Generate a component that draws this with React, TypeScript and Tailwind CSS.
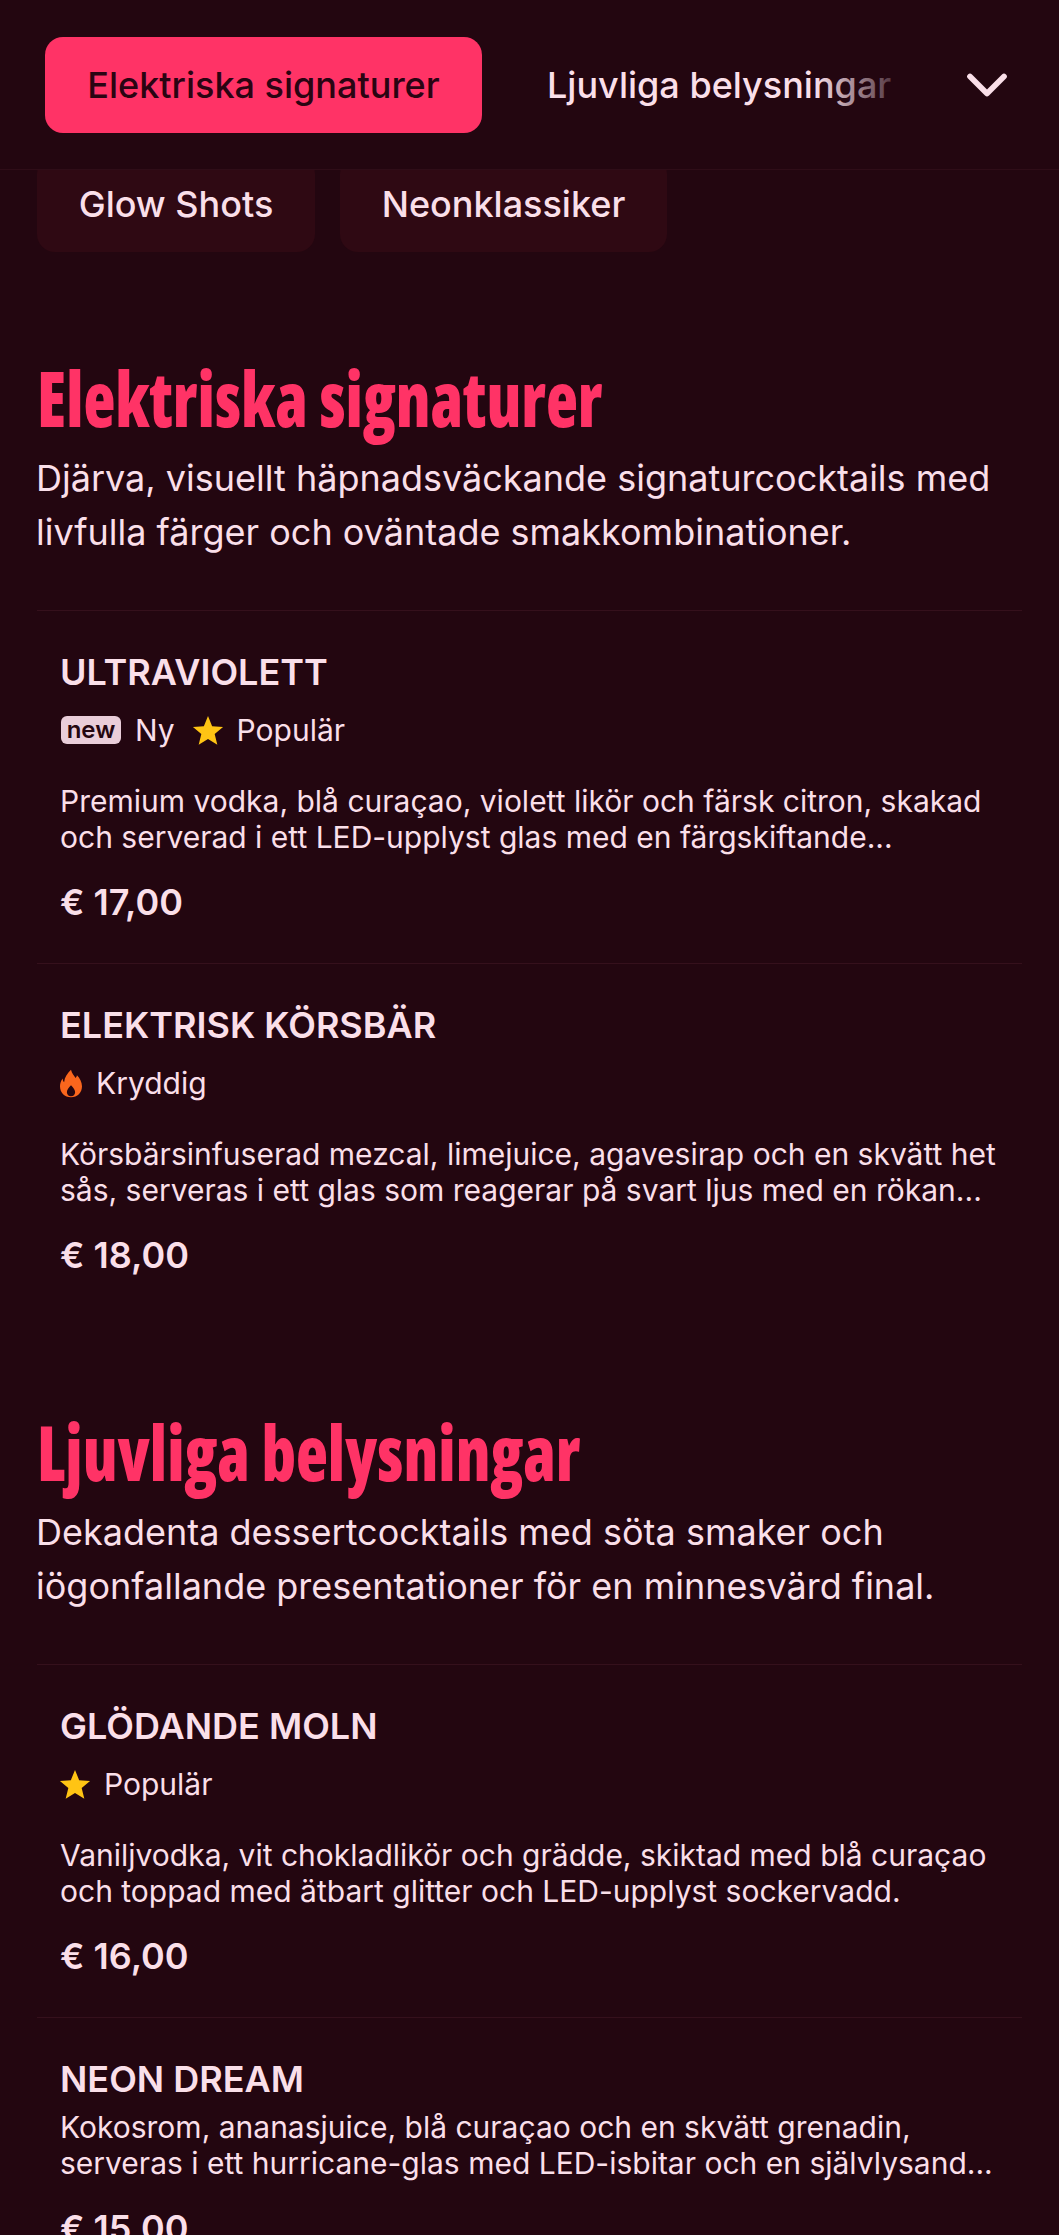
import { ChevronDown } from "lucide-react";

type Tag = "new" | "popular" | "spicy";

type Item = {
    name: string;
    tags: Tag[];
    desc: string[];
    price: string;
};

type Section = {
    title: string;
    intro: string[];
    items: Item[];
};

const sections: Section[] = [
    {
        title: "Elektriska signaturer",
        intro: [
            "Djärva, visuellt häpnadsväckande signaturcocktails med",
            "livfulla färger och oväntade smakkombinationer.",
        ],
        items: [
            {
                name: "ULTRAVIOLETT",
                tags: ["new", "popular"],
                desc: [
                    "Premium vodka, blå curaçao, violett likör och färsk citron, skakad",
                    "och serverad i ett LED-upplyst glas med en färgskiftande...",
                ],
                price: "€ 17,00",
            },
            {
                name: "ELEKTRISK KÖRSBÄR",
                tags: ["spicy"],
                desc: [
                    "Körsbärsinfuserad mezcal, limejuice, agavesirap och en skvätt het",
                    "sås, serveras i ett glas som reagerar på svart ljus med en rökan...",
                ],
                price: "€ 18,00",
            },
        ],
    },
    {
        title: "Ljuvliga belysningar",
        intro: [
            "Dekadenta dessertcocktails med söta smaker och",
            "iögonfallande presentationer för en minnesvärd final.",
        ],
        items: [
            {
                name: "GLÖDANDE MOLN",
                tags: ["popular"],
                desc: [
                    "Vaniljvodka, vit chokladlikör och grädde, skiktad med blå curaçao",
                    "och toppad med ätbart glitter och LED-upplyst sockervadd.",
                ],
                price: "€ 16,00",
            },
            {
                name: "NEON DREAM",
                tags: [],
                desc: [
                    "Kokosrom, ananasjuice, blå curaçao och en skvätt grenadin,",
                    "serveras i ett hurricane-glas med LED-isbitar och en självlysand...",
                ],
                price: "€ 15,00",
            },
        ],
    },
];

function StarIcon() {
    return (
        <svg viewBox="0 0 24 24" className="-ml-[2px] h-[32px] w-[32px] shrink-0" fill="#ffc414">
            <path d="M12 1.5l3.1 7.6 8.2.6-6.3 5.3 2 8-7-4.3-7 4.3 2-8L.7 9.700l8.2-.6z" />
        </svg>
    );
}

function FlameIcon() {
    return (
        <svg viewBox="0 0 24 30" className="-ml-[1px] h-[29px] w-[22px] shrink-0" fill="#f9661d">
            <path d="M12 0c1 4 3 6 5 9 1-1 1.500-2 1.500-3 3 3 5.500 7.500 5.500 12 0 7-5 12-12 12S0 25 0 18c0-3 1-6 3-8.500 0 2 .5 3 1.500 4C5 8 8 4 12 0zm0 17c-2.500 2.500-4.500 5-4.500 7.500 0 2.500 2 4.500 4.500 4.500s4.500-2 4.500-4.500c0-2.500-2-5-4.500-7.500z" />
        </svg>
    );
}

function TagLabel({ tag }: { tag: Tag }) {
    switch (tag) {
        case "new":
            return (
                <div className="flex items-center gap-[14px]">
                    <span className="flex h-[28px] w-[60px] items-center justify-center rounded-[6px] bg-[#e9cdd9] text-[24px] leading-none font-semibold text-[#230610]">
                        new
                    </span>
                    <span>Ny</span>
                </div>
            );
        case "popular":
            return (
                <div className="flex items-center gap-[13px]">
                    <StarIcon />
                    <span>Populär</span>
                </div>
            );
        case "spicy":
            return (
                <div className="flex items-center gap-[14px]">
                    <FlameIcon />
                    <span>Kryddig</span>
                </div>
            );
    }
}

function MenuItem({ item }: { item: Item }) {
    return (
        <div className="border-t border-[#35101c] px-[23px] pt-[39px] pb-[39px]">
            <h3 className="text-[36px] leading-[44px] font-semibold">{item.name}</h3>
            {item.tags.length > 0 && (
                <div className="mt-[16px] mb-[33px] ml-[1px] flex h-[40px] items-center gap-[19px] text-[30px]">
                    {item.tags.map((tag) => (
                        <TagLabel key={tag} tag={tag} />
                    ))}
                </div>
            )}
            <p className="mt-[8px] text-[30px] leading-[36px]">
                {item.desc.map((line) => (
                    <span key={line} className="block whitespace-nowrap">
                        {line}
                    </span>
                ))}
            </p>
            <div className="mt-[25px] text-[36px] leading-[44px] font-semibold">{item.price}</div>
        </div>
    );
}

export default function App() {
    return (
        <div className="h-[2235px] overflow-hidden bg-[#230610] font-['Inter',sans-serif] text-[#fadfe9]">
            <header className="relative z-10 flex h-[170px] items-center border-b border-[#2f0d18] bg-[#230610] pl-[45px]">
                <button className="flex h-[96px] w-[437px] shrink-0 items-center justify-center rounded-[18px] bg-[#ff3366] text-[36px] font-medium text-[#2a0412]">
                    Elektriska signaturer
                </button>
                <div className="relative ml-[65px] w-[348px] shrink-0 overflow-hidden text-[36px] font-medium whitespace-nowrap">
                    Ljuvliga belysningar
                    <div className="absolute inset-y-0 right-0 w-[80px] bg-gradient-to-r from-transparent to-[#230610]/80" />
                </div>
                <ChevronDown className="ml-[58px] h-[68px] w-[68px] shrink-0" strokeWidth={2} />
            </header>

            <div className="-mt-[14px] flex gap-[25px] pl-[37px]">
                <div className="flex h-[96px] w-[278px] items-center justify-center rounded-[18px] bg-[#2f0913] text-[36px] font-medium">
                    Glow Shots
                </div>
                <div className="flex h-[96px] w-[327px] items-center justify-center rounded-[18px] bg-[#2f0913] text-[36px] font-medium">
                    Neonklassiker
                </div>
            </div>

            <main className="px-[37px] pt-[10px]">
                {sections.map((section) => (
                    <section key={section.title} className="mt-[96px]">
                        <h2 className="origin-left scale-x-[0.855] font-['Open_Sans',sans-serif] text-[77px] leading-[80px] font-extrabold whitespace-nowrap text-[#ff3366] [font-stretch:75%]">
                            {section.title}
                        </h2>
                        <p className="mt-[13px] mb-[51px] -ml-[1px] text-[36px] leading-[54px]">
                            {section.intro.map((line) => (
                                <span key={line} className="block whitespace-nowrap">
                                    {line}
                                </span>
                            ))}
                        </p>
                        {section.items.map((item) => (
                            <MenuItem key={item.name} item={item} />
                        ))}
                    </section>
                ))}
            </main>
        </div>
    );
}
